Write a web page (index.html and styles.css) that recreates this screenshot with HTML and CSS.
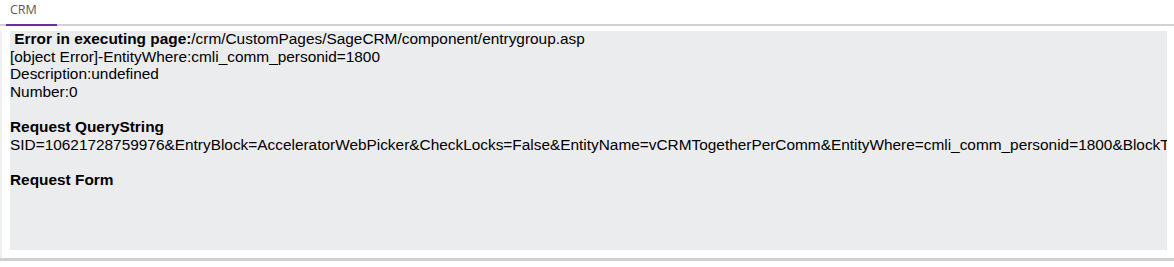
FILE: index.html
```html
<!DOCTYPE html>
<html>
<head>
<meta charset="utf-8">
<link rel="stylesheet" href="styles.css">
</head>
<body>
<div class="tabs">
  <div class="tab">CRM</div>
</div>
<div class="frame">
  <div class="panel">
    <div class="line">&nbsp;<b>Error in executing page:</b>/crm/CustomPages/SageCRM/component/entrygroup.asp</div>
    <div class="line">[object Error]-EntityWhere:cmli_comm_personid=1800</div>
    <div class="line">Description:undefined</div>
    <div class="line">Number:0</div>
    <div class="line">&nbsp;</div>
    <div class="line"><b>Request QueryString</b></div>
    <div class="line">SID=10621728759976&amp;EntryBlock=AcceleratorWebPicker&amp;CheckLocks=False&amp;EntityName=vCRMTogetherPerComm&amp;EntityWhere=cmli_comm_personid=1800&amp;BlockT</div>
    <div class="line">&nbsp;</div>
    <div class="line"><b>Request Form</b></div>
  </div>
</div>
<div class="bottom"></div>
</body>
</html>
```
FILE: styles.css
```css
html, body {
  margin: 0;
  padding: 0;
  background: #ffffff;
  width: 1174px;
  height: 267px;
  overflow: hidden;
}
.tabs {
  height: 24px;
  width: 1171px;
  border-bottom: 2px solid #d2d2d2;
  display: flex;
  align-items: flex-end;
  padding-left: 6px;
  box-sizing: content-box;
}
.tab {
  width: 51px;
  box-sizing: border-box;
  padding: 1px 0 0 4px;
  font-family: "Open Sans", "Noto Sans", sans-serif;
  font-size: 12.5px;
  color: #5a5a5a;
  position: relative;
  top: 2px;
  border-bottom: 2px solid #6a2c9f;
  height: 26px;
}
.frame {
  margin-top: 5px;
  height: 227px;
  width: 1171px;
  border-left: 2px solid #f0f0f0;
  box-sizing: border-box;
  padding-left: 8px;
}
.panel {
  width: 1157px;
  height: 219px;
  background: #ebecee;
  overflow: hidden;
  font-family: "Liberation Sans", Arial, sans-serif;
  font-size: 15.4px;
  line-height: 17.6px;
  color: #000;
  padding-top: 0;
  box-sizing: border-box;
}
.line {
  white-space: nowrap;
  position: relative;
  top: -1px;
}
.bottom {
  height: 3px;
  width: 1174px;
  background: #d0d0d0;
}
```
